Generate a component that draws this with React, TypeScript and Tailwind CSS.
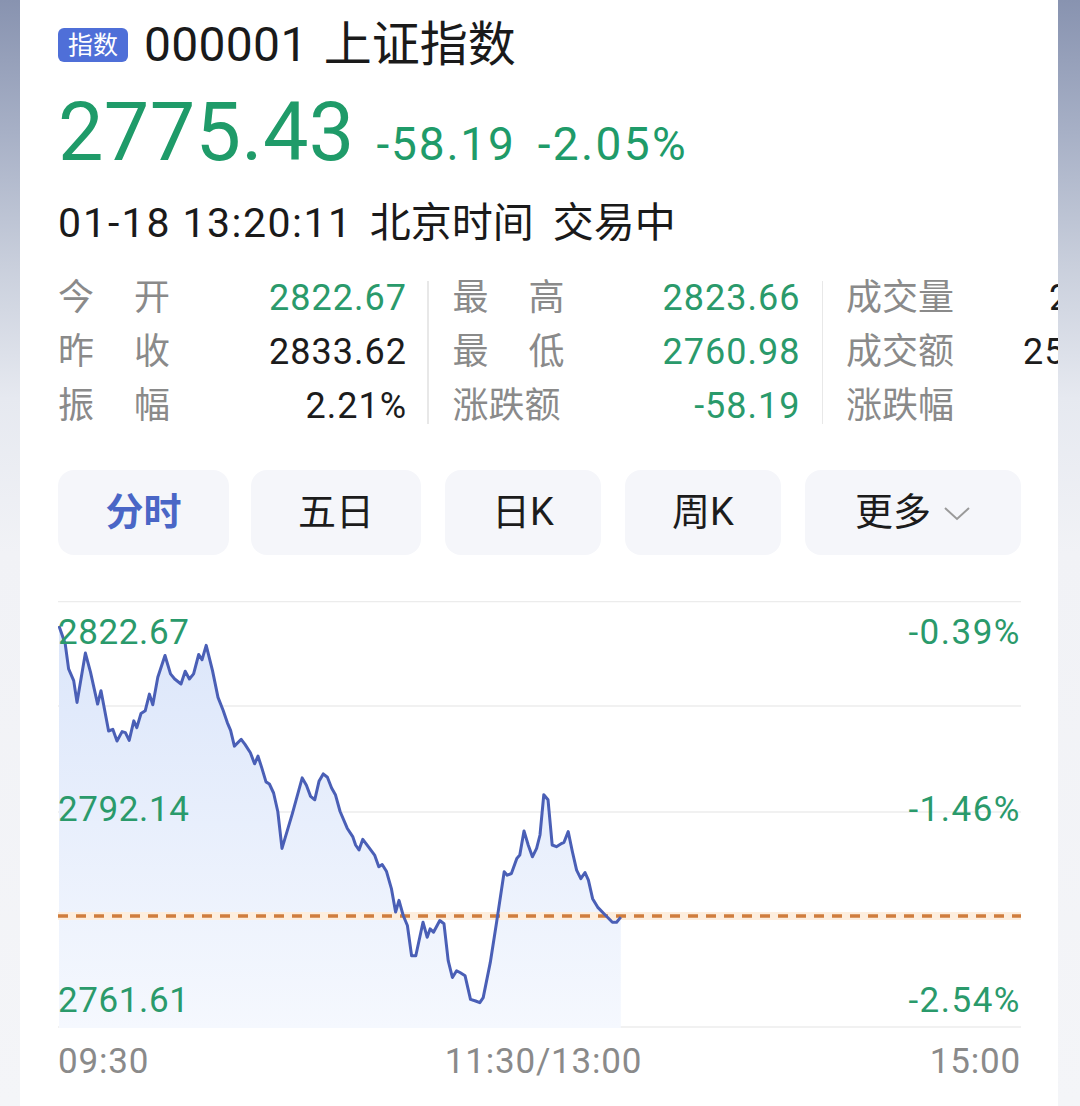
import React from "react";

const PTS: [number, number][] = [
  [59, 626], [65.2, 643.7], [68.6, 668.9], [73.7, 680.6], [77, 702.4], [85.4, 653.1], [90.5, 672.2],
  [97.6, 704.1], [101, 690.7], [108.6, 731], [112.8, 729.3], [117, 741], [122.1, 731.6], [125.4, 732.6],
  [129.2, 740.4], [133.8, 720.9], [136.8, 727.6], [141, 713.5], [145.2, 710.8], [149.4, 694.1],
  [152.8, 704.8], [157.8, 677.3], [165, 655.5], [170.5, 673.9], [174.7, 679], [181, 684], [185.2, 671.2],
  [189.4, 679], [193.6, 673.9], [198.7, 654.5], [202, 659.8], [206.2, 645.4], [212.5, 670.6], [218, 697.4],
  [223.1, 710.2], [227.3, 722.6], [230.6, 730.3], [234.4, 746.1], [241.2, 739.3], [245, 744.4],
  [250.4, 752.8], [254.6, 763.8], [258, 756.1], [261.8, 767.9], [266, 781.9], [269.4, 784], [273.6, 793],
  [277.8, 811.5], [282, 848.4], [292.5, 813.1], [302.2, 777.9], [306.4, 785.3], [310.6, 796.4],
  [314.8, 799.7], [319, 781.3], [323.2, 773.9], [327.4, 777.2], [331.6, 788], [335.4, 794.7],
  [340.1, 811.5], [347.2, 828.2], [352.7, 836.6], [355.6, 845], [359, 850], [362.8, 839.3], [368.3, 846.7],
  [374.6, 855.1], [378.8, 866.8], [382.2, 864.5], [386.4, 871.2], [391.4, 888.6], [395.6, 912.1],
  [399, 900.4], [403.2, 915.5], [407.4, 925.5], [411.6, 955.7], [415.8, 955.7], [423, 922.2],
  [427.2, 937.3], [430.1, 928.9], [433.5, 932.2], [439.8, 920.5], [444, 923.8], [448.2, 960.7],
  [452.4, 977.5], [456.6, 970.8], [460, 972.5], [465.1, 975.8], [470.5, 999.3], [475.6, 1001],
  [479.8, 1002.7], [483.2, 997.6], [490.3, 962.4], [496.6, 922.2], [504.2, 871.8], [507.2, 875.2],
  [511.4, 873.5], [516.8, 858.4], [519.8, 855.1], [524, 830.9], [528.2, 845], [532.4, 856.8],
  [536.6, 848.4], [540, 835], [543.8, 794.7], [548, 799.7], [552.2, 845], [556.4, 846.7], [561.9, 843.3],
  [564, 842.3], [568.2, 831.6], [572.4, 851.7], [576.6, 870.2], [580.8, 878.6], [585, 872.5],
  [588.4, 880.2], [592.6, 898.7], [597.6, 907.1], [604, 913.8], [612.4, 922.2], [616.6, 922.2],
  [620.8, 917.1],
];

const linePath = PTS.map((p, i) => `${i === 0 ? "M" : "L"}${p[0]} ${p[1]}`).join(" ");
const areaPath = `${linePath} L${PTS[PTS.length - 1][0]} 1028 L${PTS[0][0]} 1028 Z`;

function Label2({ a, b }: { a: string; b: string }) {
  return (
    <div className="flex w-[112px] shrink-0 justify-between tracking-normal text-[#8a8a8a]">
      <span>{a}</span>
      <span>{b}</span>
    </div>
  );
}

function Label3({ t }: { t: string }) {
  return <div className="w-[112px] shrink-0 tracking-normal text-[#8a8a8a]">{t}</div>;
}

function Tab({ w, ml, children, active }: { w: string; ml: string; children: React.ReactNode; active?: boolean }) {
  return (
    <div
      className={`${w} ${ml} flex h-[85px] shrink-0 items-center justify-center rounded-[16px] bg-[#f5f6fa] text-[38px] ${
        active ? "font-bold text-[#4a66c6]" : "text-[#1c1c1c]"
      }`}
    >
      {children}
    </div>
  );
}

const GRAD =
  "bg-[linear-gradient(to_bottom,#8893b0_0%,#a7b0c6_12%,#c9cfdc_24%,#e6e9f0_36%,#f1f2f6_50%,#f4f5f8_100%)]";

export default function App() {
  return (
    <div className="flex h-[1106px] w-[1080px] overflow-hidden bg-[#f4f5f8] font-['Roboto','Noto_Sans_CJK_SC',sans-serif]">
      <div className={`h-full w-[20px] shrink-0 ${GRAD}`} />
      <div className="relative h-full w-[1038px] shrink-0 overflow-hidden bg-white pl-[38px]">
        {/* Title */}
        <div className="mt-[17px] flex h-[56px] items-center">
          <div className="flex h-[34px] items-center rounded-[6px] bg-[#4f6fd8] px-[10px] text-[25px] leading-none text-white">
            指数
          </div>
          <div className="ml-[16px] flex text-[48px] leading-[56px] text-[#1a1a1a]">
            <span className="tracking-[0.3px]">000001</span>
            <span className="ml-[16px]">上证指数</span>
          </div>
        </div>
        {/* Price */}
        <div className="mt-[10px] flex h-[100px] items-baseline leading-[100px] text-[#1f9b69]">
          <span className="text-[81px] tracking-[0.3px]">2775.43</span>
          <span className="ml-[22px] text-[46px] tracking-[1.8px]">-58.19</span>
          <span className="ml-[22px] text-[46px] tracking-[2.4px]">-2.05%</span>
        </div>
        {/* Time */}
        <div className="mt-[12px] flex h-[56px] text-[41px] leading-[56px] text-[#1a1a1a]">
          <span className="tracking-[2px]">01-18</span>
          <span className="ml-[11px] tracking-[1.5px]">13:20:11</span>
          <span className="ml-[17px]">北京时间</span>
          <span className="ml-[19px]">交易中</span>
        </div>
        {/* Stats */}
        <div className="mt-[20px] flex items-center text-[36px] leading-[54px] tracking-[1px]">
          <div className="w-[349px] shrink-0">
            <div className="flex">
              <Label2 a="今" b="开" />
              <div className="flex-1 text-right text-[#2a9a6b]">2822.67</div>
            </div>
            <div className="flex">
              <Label2 a="昨" b="收" />
              <div className="flex-1 text-right text-[#1c1c1c]">2833.62</div>
            </div>
            <div className="flex">
              <Label2 a="振" b="幅" />
              <div className="flex-1 text-right text-[#1c1c1c]">2.21%</div>
            </div>
          </div>
          <div className="ml-[20px] h-[143px] w-[1.5px] shrink-0 bg-[#e8e8e8]" />
          <div className="ml-[24px] w-[348px] shrink-0">
            <div className="flex">
              <Label2 a="最" b="高" />
              <div className="flex-1 text-right text-[#2a9a6b]">2823.66</div>
            </div>
            <div className="flex">
              <Label2 a="最" b="低" />
              <div className="flex-1 text-right text-[#2a9a6b]">2760.98</div>
            </div>
            <div className="flex">
              <Label3 t="涨跌额" />
              <div className="flex-1 text-right text-[#2a9a6b]">-58.19</div>
            </div>
          </div>
          <div className="ml-[21px] h-[143px] w-[1.5px] shrink-0 bg-[#e8e8e8]" />
          <div className="ml-[23px] w-[400px] shrink-0">
            <div className="flex">
              <Label3 t="成交量" />
              <div className="ml-[91px] whitespace-nowrap text-[#1c1c1c]">2.97亿</div>
            </div>
            <div className="flex">
              <Label3 t="成交额" />
              <div className="ml-[65px] whitespace-nowrap text-[#1c1c1c]">2596亿</div>
            </div>
            <div className="flex">
              <Label3 t="涨跌幅" />
            </div>
          </div>
        </div>
        {/* Tabs */}
        <div className="mt-[37px] flex">
          <Tab w="w-[171px]" ml="ml-0" active>
            分时
          </Tab>
          <Tab w="w-[170px]" ml="ml-[22px]">
            五日
          </Tab>
          <Tab w="w-[156px]" ml="ml-[24px]">
            日K
          </Tab>
          <Tab w="w-[156px]" ml="ml-[24px]">
            周K
          </Tab>
          <Tab w="w-[216px]" ml="ml-[24px]">
            <span>更多</span>
            <svg width="28" height="16" viewBox="0 0 28 16" className="ml-[12px]">
              <path d="M2 3 L14 14 L26 3" fill="none" stroke="#9a9a9a" strokeWidth="2" />
            </svg>
          </Tab>
        </div>
        {/* Chart */}
        <div className="relative mt-[46px] h-[427px] w-[963px] text-[35px] leading-[35px] tracking-[0.6px] text-[#2a9a6b]">
          <svg className="absolute inset-0" width="963" height="427" viewBox="58 601 963 427">
            <defs>
              <linearGradient id="fill" x1="0" y1="601" x2="0" y2="1028" gradientUnits="userSpaceOnUse">
                <stop offset="0" stopColor="#dae5fa" />
                <stop offset="1" stopColor="#f5f8fe" />
              </linearGradient>
            </defs>
            {[601.5, 706, 812, 918, 1027].map((y) => (
              <line key={y} x1="58" x2="1021" y1={y} y2={y} stroke="#ececec" strokeWidth="1.5" />
            ))}
            <path d={areaPath} fill="url(#fill)" />
            <line x1="58" x2="1021" y1="916" y2="916" stroke="#fdeede" strokeWidth="8" />
            <line x1="58" x2="1021" y1="916" y2="916" stroke="#d07d3d" strokeWidth="3.4" strokeDasharray="10 8" />
            <path d={linePath} fill="none" stroke="#4a5fb6" strokeWidth="3" strokeLinejoin="round" />
          </svg>
          <div className="absolute left-0 top-[14px]">2822.67</div>
          <div className="absolute left-0 top-[191px]">2792.14</div>
          <div className="absolute left-0 top-[382px]">2761.61</div>
          <div className="absolute right-0 top-[14px] tracking-[1.5px]">-0.39%</div>
          <div className="absolute right-0 top-[191px] tracking-[1.5px]">-1.46%</div>
          <div className="absolute right-0 top-[382px] tracking-[1.5px]">-2.54%</div>
        </div>
        <div className="mt-[16px] flex w-[963px] justify-between text-[35px] leading-[35px] tracking-[0.8px] text-[#8a8a8a]">
          <span>09:30</span>
          <span className="ml-[8px]">11:30/13:00</span>
          <span>15:00</span>
        </div>
      </div>
      <div className={`h-full w-[22px] shrink-0 ${GRAD}`} />
    </div>
  );
}
